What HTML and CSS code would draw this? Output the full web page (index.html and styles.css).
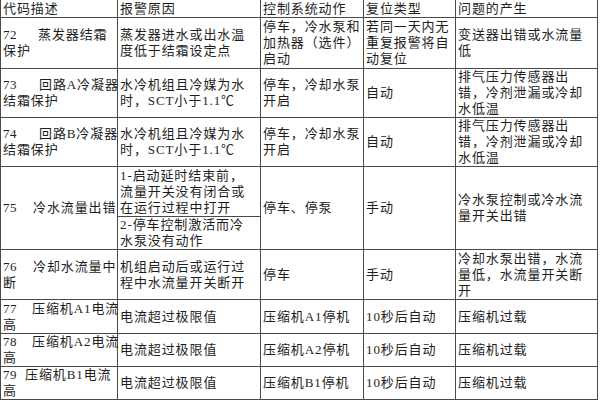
FILE: index.html
```html
<!DOCTYPE html>
<html lang="zh">
<head>
<meta charset="utf-8">
<link rel="stylesheet" href="styles.css">
</head>
<body>
<table class="alarm">
  <colgroup>
    <col class="c1"><col class="c2"><col class="c3"><col class="c4"><col class="c5">
  </colgroup>
  <tr class="h">
    <th>代码描述</th><th>报警原因</th><th>控制系统动作</th><th>复位类型</th><th>问题的产生</th>
  </tr>
  <tr class="r51">
    <td><span class="n n72">72</span>蒸发器结霜<br>保护</td>
    <td>蒸发器进水或出水温<br>度低于结霜设定点</td>
    <td>停车，冷水泵和<br>加热器（选件）<br>启动</td>
    <td>若同一天内无<br>重复报警将自<br>动复位</td>
    <td>变送器出错或水流量<br>低</td>
  </tr>
  <tr class="r49">
    <td><span class="n n73">73</span>回路A冷凝器<br>结霜保护</td>
    <td>水冷机组且冷媒为水<br>时，SCT小于1.1℃</td>
    <td>停车，冷却水泵<br>开启</td>
    <td>自动</td>
    <td>排气压力传感器出<br>错，冷剂泄漏或冷却<br>水低温</td>
  </tr>
  <tr class="r48">
    <td><span class="n n73">74</span>回路B冷凝器<br>结霜保护</td>
    <td>水冷机组且冷媒为水<br>时，SCT小于1.1℃</td>
    <td>停车，冷却水泵<br>开启</td>
    <td>自动</td>
    <td>排气压力传感器出<br>错，冷剂泄漏或冷却<br>水低温</td>
  </tr>
  <tr class="r50">
    <td rowspan="2"><span class="n n75">75</span>冷水流量出错</td>
    <td>1-启动延时结束前，<br>流量开关没有闭合或<br>在运行过程中打开</td>
    <td rowspan="2">停车、停泵</td>
    <td rowspan="2">手动</td>
    <td rowspan="2">冷水泵控制或冷水流<br>量开关出错</td>
  </tr>
  <tr class="r33">
    <td>2-停车控制激活而冷<br>水泵没有动作</td>
  </tr>
  <tr class="r50">
    <td><span class="n n75">76</span>冷却水流量中<br>断</td>
    <td>机组启动后或运行过<br>程中水流量开关断开</td>
    <td>停车</td>
    <td>手动</td>
    <td>冷却水泵出错，水流<br>量低，水流量开关断<br>开</td>
  </tr>
  <tr class="r34">
    <td><span class="n n77">77</span>压缩机A1电流<br>高</td>
    <td>电流超过极限值</td>
    <td>压缩机A1停机</td>
    <td>10秒后自动</td>
    <td>压缩机过载</td>
  </tr>
  <tr class="r33">
    <td><span class="n n77">78</span>压缩机A2电流<br>高</td>
    <td>电流超过极限值</td>
    <td>压缩机A2停机</td>
    <td>10秒后自动</td>
    <td>压缩机过载</td>
  </tr>
  <tr class="r31">
    <td><span class="n n79">79</span>压缩机B1电流<br>高</td>
    <td>电流超过极限值</td>
    <td>压缩机B1停机</td>
    <td>10秒后自动</td>
    <td>压缩机过载</td>
  </tr>
  <tr class="r33">
    <td></td><td></td><td></td><td></td><td></td>
  </tr>
</table>
</body>
</html>
```
FILE: styles.css
```css
html, body {
  margin: 0;
  padding: 0;
  background: #ffffff;
}
body {
  width: 600px;
  height: 400px;
  overflow: hidden;
}
.alarm {
  border-collapse: collapse;
  table-layout: fixed;
  width: 598px;
  font-family: "Liberation Serif", "Noto Sans CJK SC", serif;
  font-size: 13px;
  letter-spacing: 0.9px;
  line-height: 16px;
  color: #1e1e1e;
  margin-top: -1px;
}
.c1 { width: 117px; }
.c2 { width: 143px; }
.c3 { width: 103px; }
.c4 { width: 92px; }
.c5 { width: 142px; }
.alarm th,
.alarm td {
  border: 1px solid #4a4a4a;
  padding: 0 0 0 2px;
  text-align: left;
  vertical-align: middle;
  font-weight: normal;
  white-space: nowrap;
}
.alarm th { border-top-color: #ffffff; }
.h { height: 18px; }
.r51 { height: 51px; }
.r50 { height: 50px; }
.r49 { height: 49px; }
.r48 { height: 48px; }
.r34 { height: 34px; }
.r33 { height: 33px; }
.r31 { height: 31px; }
.n {
  display: inline-block;
  letter-spacing: 0.5px;
}
.n72 { width: 35px; }
.n73 { width: 36px; }
.n75 { width: 30px; }
.n77 { width: 29px; }
.n79 { width: 22px; }
```
